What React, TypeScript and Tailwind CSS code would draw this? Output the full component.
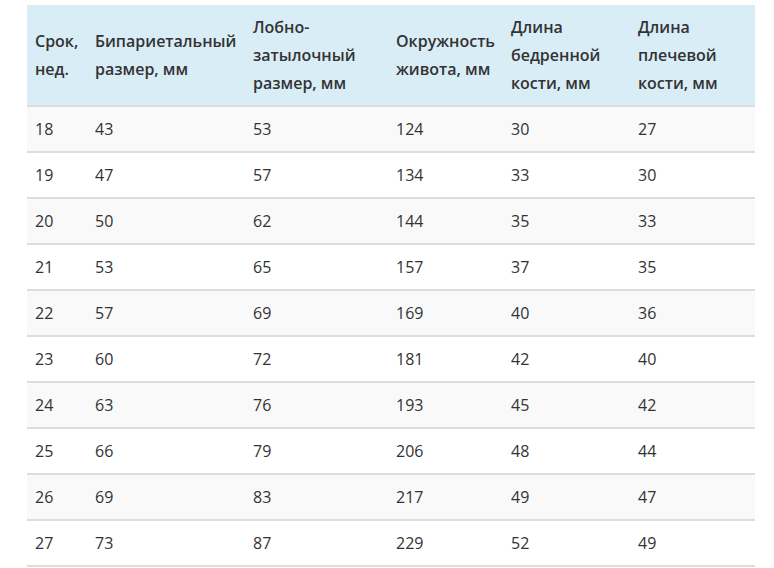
const headers = [
  'Срок, нед.',
  'Бипариетальный размер, мм',
  'Лобно-затылочный размер, мм',
  'Окружность живота, мм',
  'Длина бедренной кости, мм',
  'Длина плечевой кости, мм',
];

const rows = [
  [18, 43, 53, 124, 30, 27],
  [19, 47, 57, 134, 33, 30],
  [20, 50, 62, 144, 35, 33],
  [21, 53, 65, 157, 37, 35],
  [22, 57, 69, 169, 40, 36],
  [23, 60, 72, 181, 42, 40],
  [24, 63, 76, 193, 45, 42],
  [25, 66, 79, 206, 48, 44],
  [26, 69, 83, 217, 49, 47],
  [27, 73, 87, 229, 52, 49],
];

const widths = ['w-[60px]', 'w-[158px]', 'w-[143px]', 'w-[115px]', 'w-[127px]', 'w-[125px]'];

export default function App() {
  return (
    <div className="bg-white min-h-screen pt-[5px] pl-[27px] font-['Open_Sans',sans-serif] text-[16px] text-[#333]">
      <table className="table-fixed border-collapse w-[728px]">
        <colgroup>
          {widths.map((w, i) => (
            <col key={i} className={w} />
          ))}
        </colgroup>
        <thead>
          <tr className="bg-[#d9edf7]">
            {headers.map((h) => (
              <th
                key={h}
                className="h-[100px] px-2 py-2 text-left align-middle font-semibold leading-[28px] border-b-2 border-[#ddd]"
              >
                {h}
              </th>
            ))}
          </tr>
        </thead>
        <tbody>
          {rows.map((r, i) => (
            <tr key={r[0]} className={i % 2 === 0 ? 'bg-[#f9f9f9]' : 'bg-white'}>
              {r.map((v, j) => (
                <td
                  key={j}
                  className="h-[46px] px-2 align-middle leading-[22px] border-b-2 border-[#ddd]"
                >
                  {v}
                </td>
              ))}
            </tr>
          ))}
        </tbody>
      </table>
    </div>
  );
}
